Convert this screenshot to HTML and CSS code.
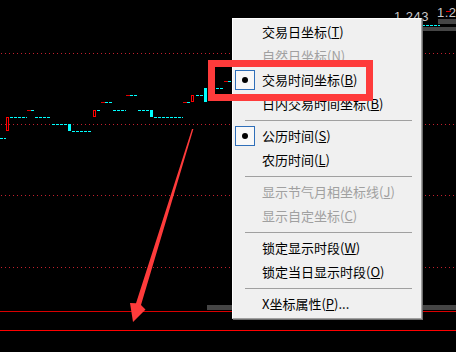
FILE: index.html
```html
<!DOCTYPE html>
<html>

<head>
  <title>X坐标菜单</title>
  <link rel="stylesheet" href="styles.css">
</head>

<body>
  <div class="screen">
    <svg class="chart" width="456" height="352" viewBox="0 0 456 352">
      <g class="grid">
        <line x1="1" y1="53.5" x2="456" y2="53.5" />
        <line x1="1" y1="124.5" x2="456" y2="124.5" />
        <line x1="1" y1="195.5" x2="456" y2="195.5" />
        <line x1="1" y1="267.5" x2="456" y2="267.5" />
      </g>

      <g class="ticks">
        <line x1="10" y1="117.5" x2="27" y2="117.5" />
        <line x1="31" y1="110.5" x2="35" y2="110.5" />
        <line x1="35" y1="117.5" x2="51" y2="117.5" />
        <line x1="52" y1="124.5" x2="68" y2="124.5" />
        <line x1="72" y1="131.5" x2="92" y2="131.5" />
        <line x1="0" y1="138.5" x2="6" y2="138.5" />
        <line x1="97" y1="110.5" x2="101" y2="110.5" />
        <line x1="105" y1="102.5" x2="113" y2="102.5" />
        <line x1="113" y1="110.5" x2="126" y2="110.5" />
        <line x1="130" y1="95.5" x2="138" y2="95.5" />
        <line x1="138" y1="110.5" x2="150" y2="110.5" />
        <line x1="154" y1="117.5" x2="183" y2="117.5" />
        <line x1="187" y1="102.5" x2="191" y2="102.5" />
        <line x1="196" y1="95.5" x2="204" y2="95.5" />
        <line x1="208" y1="88.5" x2="224" y2="88.5" />
        <line x1="228" y1="81.5" x2="232" y2="81.5" />
        <line x1="422" y1="25.5" x2="440" y2="25.5" />
      </g>

      <g class="blocks">
        <rect x="68" y="124" width="3" height="7" />
        <rect x="150" y="110" width="3" height="7" />
        <rect x="204" y="88" width="3" height="14" />
      </g>

      <g class="down">
        <line x1="27" y1="110.5" x2="31" y2="110.5" />
        <line x1="101" y1="102.5" x2="105" y2="102.5" />
        <line x1="126" y1="95.5" x2="130" y2="95.5" />
        <line x1="183" y1="102.5" x2="187" y2="102.5" />
        <line x1="224" y1="81.5" x2="228" y2="81.5" />
        <line x1="446" y1="11.5" x2="451" y2="11.5" />
      </g>

      <g class="hollow">
        <rect x="6.5" y="117.5" width="2" height="13" />
        <rect x="93.5" y="110.5" width="2" height="6" />
        <rect x="191.5" y="95.5" width="2" height="6" />
      </g>

      <rect class="bar" x="438" y="19" width="18" height="5" />
      <rect class="bar" x="422" y="27" width="34" height="4" />
      <rect class="bar" x="207" y="305" width="249" height="5" />
      <line class="base" x1="0" y1="311.5" x2="456" y2="311.5" />
      <line class="base strong" x1="0" y1="330.5" x2="456" y2="330.5" />

      <text class="price" x="394" y="21">1.243</text>
      <text class="price" x="437" y="17">1.2</text>
    </svg>

    <ul class="menu">
      <li class="item">交易日坐标(<u>T</u>)</li>
      <li class="item disabled">自然日坐标(<u>N</u>)</li>
      <li class="item checked">交易时间坐标(<u>B</u>)</li>
      <li class="item">日内交易时间坐标(<u>B</u>)</li>
      <li class="sep"></li>
      <li class="item checked">公历时间(<u>S</u>)</li>
      <li class="item">农历时间(<u>L</u>)</li>
      <li class="sep"></li>
      <li class="item disabled">显示节气月相坐标线(<u>J</u>)</li>
      <li class="item disabled">显示自定坐标(<u>C</u>)</li>
      <li class="sep"></li>
      <li class="item">锁定显示时段(<u>W</u>)</li>
      <li class="item">锁定当日显示时段(<u>O</u>)</li>
      <li class="sep"></li>
      <li class="item">X坐标属性(<u>P</u>)...</li>
    </ul>

    <!-- 标注 -->
    <div class="mark"></div>
    <svg class="arrow" width="456" height="352" viewBox="0 0 456 352">
      <polygon points="192,129 193.4,129 141,305 145.5,309.5 133,322 130,303 136,303.3" />
    </svg>
  </div>
</body>

</html>
```

FILE: styles.css
```css
body {
  margin: 0;
  background-color: #000;
  overflow: hidden;
  font-family: "Noto Sans CJK SC", sans-serif;
}

.screen {
  position: relative;
  width: 456px;
  height: 352px;
}

.chart {
  display: block;
}

.grid line {
  stroke: #c4202e;
  stroke-width: 1;
  stroke-dasharray: 1 3;
}

.ticks line {
  stroke: #00ffff;
  stroke-width: 1;
  stroke-dasharray: 3 1;
}

.blocks rect {
  fill: #00ffff;
}

.down line {
  stroke: #e00000;
  stroke-width: 1;
}

.hollow rect {
  fill: none;
  stroke: #ff0000;
  stroke-width: 1;
}

.bar {
  fill: #454545;
}

.base {
  stroke: #d80000;
  stroke-width: 1;
}

.base.strong {
  stroke: #ff0000;
}

.price {
  fill: #c8c8c8;
  font-family: "Liberation Sans", sans-serif;
  font-size: 13px;
  letter-spacing: 0.5px;
}

.menu {
  position: absolute;
  left: 232px;
  top: 18px;
  width: 188px;
  margin: 0;
  padding: 1px 0 2px;
  list-style: none;
  background-color: #f0f0f0;
  border: 1px solid;
  border-color: #fff #a0a0a0 #a0a0a0 #fff;
  box-shadow: 1px 1px 0 #6d6d6d;
  font-size: 13px;
}

.item {
  position: relative;
  height: 24px;
  line-height: 24px;
  padding-left: 29px;
  color: #000;
  white-space: nowrap;
}

.item.disabled {
  color: #a0a0a0;
}

.item.checked::before {
  content: "";
  position: absolute;
  left: 2px;
  top: 2px;
  width: 18px;
  height: 18px;
  border: 1px solid #2f6fb9;
  background-color: #f8f8f8;
}

.item.checked::after {
  content: "";
  position: absolute;
  left: 9px;
  top: 9px;
  width: 6px;
  height: 6px;
  border-radius: 50%;
  background-color: #000;
}

.sep {
  height: 4px;
  margin: 0 9px 3px 12px;
  border-bottom: 1px solid #a0a0a0;
}

.mark {
  position: absolute;
  left: 208px;
  top: 60px;
  width: 151px;
  height: 27px;
  border: 7px solid #fe3b3b;
}

.arrow {
  position: absolute;
  left: 0;
  top: 0;
  pointer-events: none;
}

.arrow polygon {
  fill: #fe3b3b;
}
```
